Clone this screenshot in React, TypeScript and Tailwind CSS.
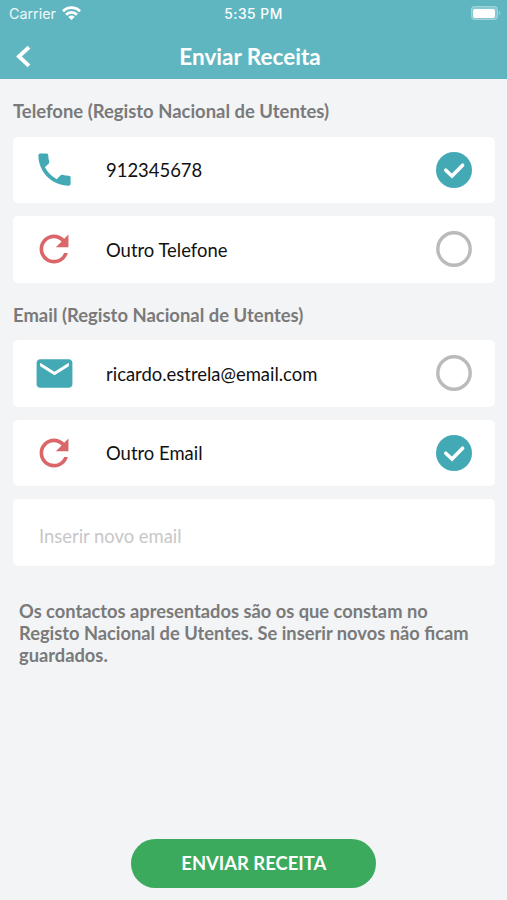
import type { ReactNode } from "react";
import { IoMdRefresh } from "react-icons/io";
import { MdEmail, MdPhone } from "react-icons/md";

function StatusBar() {
  return (
    <div className="grid h-7 grid-cols-3 items-center pl-[9px] pr-[7px] font-['Inter',sans-serif] text-[13.8px] leading-none text-white">
      <div className="flex items-center gap-[6px]">
        <span className="text-[14.3px] text-white/90">Carrier</span>
        <svg className="h-[14px] w-[19px] -translate-y-px" viewBox="0 0 19 14">
          <g fill="none" stroke="white" strokeWidth="2.8">
            <path d="M1 5.2a12 12 0 0 1 17 0" />
            <path d="M4.1 8.7a7.6 7.6 0 0 1 10.8 0" />
          </g>
          <path d="M9.5 14 6.3 10.9a4.4 4.4 0 0 1 6.4 0z" fill="white" />
        </svg>
      </div>
      <span className="-ml-0.5 pt-px text-center font-medium tracking-[0.5px]">5:35 PM</span>
      <div className="flex -translate-y-px items-center justify-end gap-[1px]">
        <div className="h-[14px] w-[27px] rounded-[4px] border border-white/20 bg-white/25 p-[1.5px]">
          <div className="h-full rounded-[2px] bg-white" />
        </div>
        <div className="h-1 w-[1.5px] rounded-r bg-white/40" />
      </div>
    </div>
  );
}

function Header() {
  return (
    <header className="h-[79px] bg-[#60b6c0]">
      <StatusBar />
      <div className="grid h-[57px] grid-cols-[57px_1fr_64px] items-center">
        <button aria-label="Voltar" className="pl-[14px]">
          <svg className="h-6 w-[18px]" viewBox="0 0 18 24">
            <path
              d="M13.5 3.5 5 11.4l8.5 8.1"
              fill="none"
              stroke="white"
              strokeWidth="4"
              strokeLinecap="square"
              strokeLinejoin="miter"
            />
          </svg>
        </button>
        <h1 className="text-center text-[22.5px] font-bold text-white">
          Enviar Receita
        </h1>
      </div>
    </header>
  );
}

function RadioMark({ checked }: { checked: boolean }) {
  return (
    <svg className="h-9 w-9" viewBox="0 0 36 36">
      {checked ? (
        <>
          <circle cx="18" cy="18" r="18" fill="#43a9b5" />
          <path
            d="M9.8 18.2 16 24 26.6 13.2"
            fill="none"
            stroke="white"
            strokeWidth="3.6"
            strokeLinecap="round"
          />
        </>
      ) : (
        <circle cx="18" cy="18" r="16.2" fill="none" stroke="#bababa" strokeWidth="3.4" />
      )}
    </svg>
  );
}

type OptionProps = {
  icon: ReactNode;
  label: string;
  checked?: boolean;
};

function Option({ icon, label, checked = false }: OptionProps) {
  return (
    <button
      role="radio"
      aria-checked={checked}
      className="flex h-[66.5px] w-full items-center rounded-[5px] bg-white pl-[19.5px] pr-[22.5px] text-left"
    >
      <span className="flex w-[43px] shrink-0 justify-center">{icon}</span>
      <span className="ml-[30.5px] flex-1 pt-[2.5px] text-[18.45px] text-[#111]">{label}</span>
      <RadioMark checked={checked} />
    </button>
  );
}

function Section({ title, children }: { title: string; children: ReactNode }) {
  return (
    <section>
      <h2 className="text-[18.45px] leading-6 font-bold text-[#7a7a7a]">{title}</h2>
      <div className="mt-[13.5px] flex flex-col gap-[13px]">{children}</div>
    </section>
  );
}

export default function App() {
  return (
    <div className="flex h-[900px] w-[507px] flex-col bg-[#f2f4f6] font-['Lato',sans-serif]">
      <Header />
      <main className="flex flex-1 flex-col pt-5 pr-[12.5px] pl-[13px]">
        <Section title="Telefone (Registo Nacional de Utentes)">
          <Option icon={<MdPhone size={43} color="#43a9b5" />} label="912345678" checked />
          <Option icon={<IoMdRefresh size={42} color="#d9676a" />} label="Outro Telefone" />
        </Section>
        <div className="mt-5">
          <Section title="Email (Registo Nacional de Utentes)">
            <Option icon={<MdEmail size={43} color="#43a9b5" />} label="ricardo.estrela@email.com" />
            <Option icon={<IoMdRefresh size={42} color="#d9676a" />} label="Outro Email" checked />
            <input
              type="email"
              placeholder="Inserir novo email"
              className="h-[66.5px] w-full rounded-[5px] bg-white px-[26px] pt-[7px] text-[18.4px] placeholder:text-[#c7c7c9]"
            />
          </Section>
        </div>
        <p className="mt-[34px] px-1.5 text-[18.3px] leading-[22px] font-bold text-[#7a7a7a]">
          Os contactos apresentados são os que constam no
          <br />
          Registo Nacional de Utentes. Se inserir novos não ficam
          <br />
          guardados.
        </p>
        <button className="mx-auto mt-auto mb-3 h-[49px] w-[245px] rounded-full bg-[#3caa5c] pt-px text-[18.4px] font-bold text-white">
          ENVIAR RECEITA
        </button>
      </main>
    </div>
  );
}
